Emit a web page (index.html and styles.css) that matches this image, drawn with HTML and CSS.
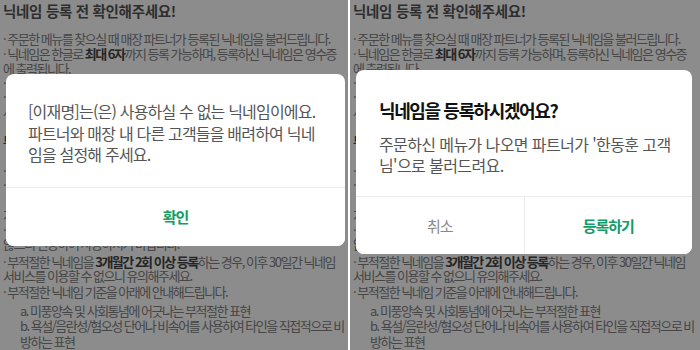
FILE: index.html
```html
<!DOCTYPE html>
<html lang="ko">
<head>
  <meta charset="UTF-8">
  <meta name="viewport" content="width=device-width, initial-scale=1.0">
  <title>닉네임 등록</title>
  <link rel="stylesheet" href="styles.css">
</head>
<body>
  <div class="screens">

    <!-- 왼쪽 화면: 사용할 수 없는 닉네임 -->
    <div class="screen">
      <div class="notice">
        <h2 class="notice-title">닉네임 등록 전 확인해주세요!</h2>
        <p class="item first">· 주문한 메뉴를 찾으실 때 매장 파트너가 등록된 닉네임을 불러드립니다.</p>
        <p class="item">· 닉네임은 한글로 <b>최대 6자</b>까지 등록 가능하며, 등록하신 닉네임은 영수증<br>에 출력됩니다.</p>
        <!-- 팝업에 가려지는 줄들 (왼쪽 끝만 보임) -->
        <div class="hidden-lines">
          ·<br>·<br>사<br>&nbsp;<br><b>부</b><br>&nbsp;<br>·<br>·<br>&nbsp;<br>가<br>·<br>
          않으니 신중하여 사용하시기 바랍니다.
        </div>
        <p class="item gap">· 부적절한 닉네임을 <b>3개월간 2회 이상 등록</b>하는 경우, 이후 30일간 닉네임<br>서비스를 이용할 수 없으니 유의해주세요.</p>
        <p class="item">· 부적절한 닉네임 기준을 아래에 안내해드립니다.</p>
        <p class="sub">a. 미풍양속 및 사회통념에 어긋나는 부적절한 표현<br>b. 욕설/음란성/혐오성 단어나 비속어를 사용하여 타인을 직접적으로 비<br>방하는 표현</p>
      </div>

      <div class="overlay">
        <div class="dialog dialog-alert">
          <div class="dialog-body">
            <p class="dialog-text">[이재명]는(은) 사용하실 수 없는 닉네임이에요.<br>파트너와 매장 내 다른 고객들을 배려하여 닉네<br>임을 설정해 주세요.</p>
          </div>
          <div class="dialog-buttons">
            <button class="btn btn-ok">확인</button>
          </div>
        </div>
      </div>
    </div>

    <!-- 오른쪽 화면: 닉네임 등록 확인 -->
    <div class="screen">
      <div class="notice">
        <h2 class="notice-title">닉네임 등록 전 확인해주세요!</h2>
        <p class="item first">· 주문한 메뉴를 찾으실 때 매장 파트너가 등록된 닉네임을 불러드립니다.</p>
        <p class="item">· 닉네임은 한글로 <b>최대 6자</b>까지 등록 가능하며, 등록하신 닉네임은 영수증<br>에 출력됩니다.</p>
        <div class="hidden-lines">
          ·<br>·<br>사<br>&nbsp;<br><b>부</b><br>&nbsp;<br>·<br>·<br>&nbsp;<br>가<br>·<br>
          않
        </div>
        <p class="item gap">· 부적절한 닉네임을 <b>3개월간 2회 이상 등록</b>하는 경우, 이후 30일간 닉네임<br>서비스를 이용할 수 없으니 유의해주세요.</p>
        <p class="item">· 부적절한 닉네임 기준을 아래에 안내해드립니다.</p>
        <p class="sub">a. 미풍양속 및 사회통념에 어긋나는 부적절한 표현<br>b. 욕설/음란성/혐오성 단어나 비속어를 사용하여 타인을 직접적으로 비<br>방하는 표현</p>
      </div>

      <div class="overlay">
        <div class="dialog dialog-confirm">
          <div class="dialog-body">
            <h3 class="dialog-title">닉네임을 등록하시겠어요?</h3>
            <p class="dialog-text">주문하신 메뉴가 나오면 파트너가 '한동훈 고객<br>님'으로 불러드려요.</p>
          </div>
          <div class="dialog-buttons">
            <button class="btn btn-cancel">취소</button>
            <button class="btn btn-ok">등록하기</button>
          </div>
        </div>
      </div>
    </div>

  </div>
</body>
</html>
```

FILE: styles.css
```css
/* 기본 설정 */
body {
  margin: 0;
  font-family: "Noto Sans CJK KR", "Noto Sans", sans-serif;
  background: #fff;
}
/* 두 화면을 나란히 */
.screens {
  display: grid;
  grid-template-columns: 348px 350px;
  gap: 2px;
  width: 700px;
  height: 350px;
  background: #fff;
}
.screen {
  position: relative;
  overflow: hidden;
  background: #fff;
}
/* 안내 문구 (배경) */
.notice {
  padding: 1px 0 0 3px;
  color: #808080;
  font-size: 13px;
  letter-spacing: -1.5px;
  white-space: nowrap;
}
.notice b {
  color: #444;
}
.notice-title {
  margin: 0;
  font-size: 14.5px;
  line-height: 20px;
  letter-spacing: -0.3px;
  color: #555;
}
.item {
  margin: 0;
  line-height: 15px;
}
.item.first {
  margin-top: 9.5px;
}
.hidden-lines {
  line-height: 14.7px;
}
.item.gap {
  margin-top: 2.6px;
  line-height: 14.5px;
}
.sub {
  margin: 4px 0 0;
  padding-left: 17px;
  line-height: 15.5px;
}
/* 어두운 배경 */
.overlay {
  position: absolute;
  top: 0;
  left: 0;
  right: 0;
  bottom: 0;
  background: rgba(0, 0, 0, 0.45);
  display: flex;
  align-items: flex-start;
  padding-left: 6px;
}
/* 팝업 */
.dialog {
  background: #fff;
  border-radius: 8px;
  overflow: hidden;
}
.dialog-alert {
  width: 339px;
  margin-top: 74px;
}
.dialog-alert .dialog-body {
  padding: 27px 20px 21px 22px;
}
.dialog-confirm {
  width: 336px;
  margin-top: 70px;
}
.dialog-confirm .dialog-body {
  padding: 28px 20px 20px 23px;
}
.dialog-title {
  margin: 0 0 11.5px;
  font-size: 18px;
  line-height: 24px;
  letter-spacing: -1.4px;
  color: #111;
}
.dialog-text {
  margin: 0;
  font-size: 16px;
  line-height: 21.5px;
  letter-spacing: -0.8px;
  color: #555;
  white-space: nowrap;
}
.dialog-confirm .dialog-text {
  line-height: 21px;
  letter-spacing: -0.6px;
}
.dialog-buttons {
  display: flex;
  border-top: 1px solid #ececec;
}
.btn {
  flex: 1;
  height: 58px;
  border: none;
  background: #fff;
  font-family: inherit;
  font-size: 15px;
  letter-spacing: -1px;
  padding: 0;
}
.dialog-confirm .btn {
  height: 57.5px;
}
.btn + .btn {
  border-left: 1px solid #ececec;
}
.btn-ok {
  color: #119c63;
  font-weight: bold;
}
.btn-cancel {
  color: #888;
}
```
